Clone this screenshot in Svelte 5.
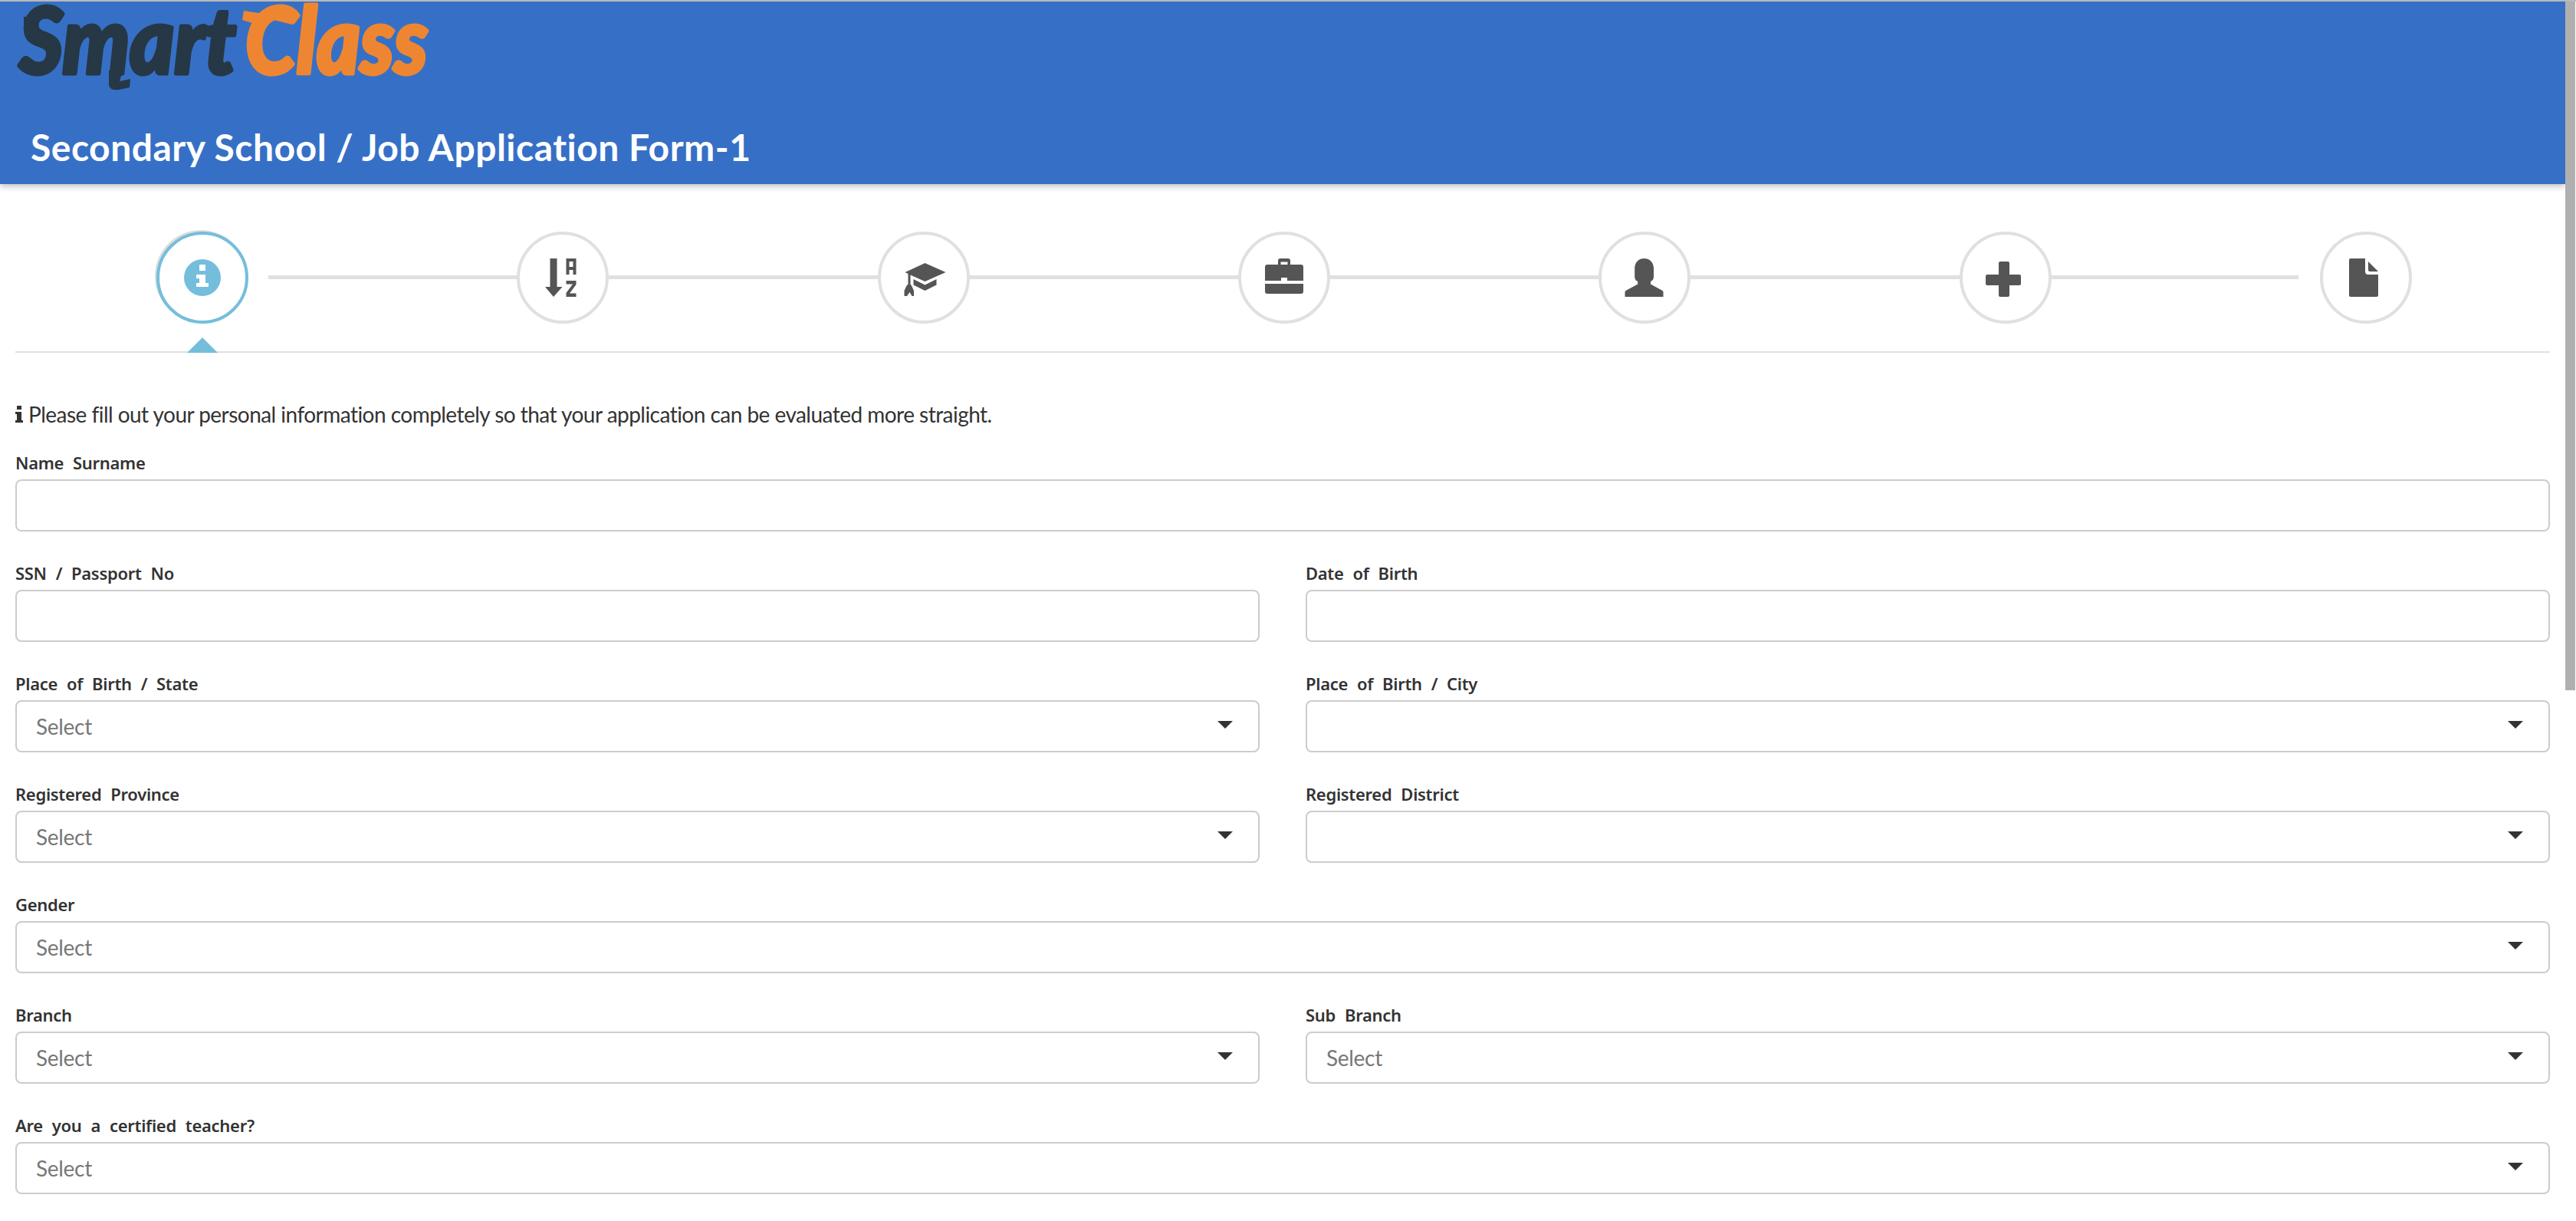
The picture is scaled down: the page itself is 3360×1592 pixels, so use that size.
<script>
  const steps = [
    { vb: '-7 -5 60 60', paths: ['M6.500 0h9v37h7L11 50 0 37h6.500z', 'M27.500 0h13v21h-4v-6h-5v6h-4zM31.500 4v7h5V4z', 'M27.500 29h13v5L32 45.500h8.500V50h-13v-5L36 33.500h-8.500z'] },
    { vb: '-4.500 -11 60 60', paths: ['M27 0L54 12 27 24 8 15.500v12l1.500 2 3 6.500V43H10l-3-5-3.500 5H0v-7l3-6.500 2-2V14L1 12z', 'M12 21l15 7.500L42 21v7.500L27 36l-15-7.500z'] },
    { vb: '-5 -5 60 60', paths: ['M17 8V3q0-3 3-3h10q3 0 3 3v5h-3.500V4.500h-9V8z', 'M3 8h44q3 0 3 3v18H29v-4h-8v4H0V11q0-3 3-3z', 'M0 33h50v10q0 3-3 3H3q-3 0-3-3z'] },
    { vb: '-4.500 -5 60 60', paths: ['M25 0c8 0 12.500 6 12.500 13v11c0 3-1.500 5-4 6v3.500L49 42q1 1 1 2v6H0v-6q0-1 1-2l15.700-8.500V30c-2.500-1-4-3-4-6V13C12.700 6 17 0 25 0z'] },
    { vb: '-4 -9 60 60', paths: ['M19 0h10q2 0 2 2v15h13q2 0 2 2v10q0 2-2 2H31v13q0 2-2 2H19q-2 0-2-2V31H2q-2 0-2-2V19q0-2 2-2h15V2q0-2 2-2z'] },
    { vb: '-8 -5 60 60', paths: ['M2 0h19v17q0 4 4 4h13v27q0 2-2 2H2q-2 0-2-2V2q0-2 2-2z', 'M25 4l13 13H27q-2 0-2-2z'] }
  ];

  const fields = [
    { label: 'Name Surname', wide: true },
    { label: 'SSN / Passport No' },
    { label: 'Date of Birth' },
    { label: 'Place of Birth / State', select: 'Select' },
    { label: 'Place of Birth / City', select: '' },
    { label: 'Registered Province', select: 'Select' },
    { label: 'Registered District', select: '' },
    { label: 'Gender', select: 'Select', wide: true },
    { label: 'Branch', select: 'Select' },
    { label: 'Sub Branch', select: 'Select' },
    { label: 'Are you a certified teacher?', select: 'Select', wide: true }
  ];
</script>

<div class="page">
  <header class="header">
    <svg class="logo" width="600" height="124" viewBox="0 0 600 124" role="img" aria-label="SmartClass">
      <text class="logo-text dark" x="25" y="94" textLength="283" lengthAdjust="spacingAndGlyphs">Smart</text>
      <text class="logo-text orange" x="320" y="94" textLength="238" lengthAdjust="spacingAndGlyphs">Class</text>
      <path class="dark-fill" d="M31 20l14-2 6 8-20 3z" />
      <path class="dark-fill" d="M142 90h18l-4 14 14-3-1 11-14 3c-8 1-14-1-13-10z" />
      <path class="orange-fill" d="M318 12l20 3 12-6 34 3-3 18-24-6-13 7-12-2-16-5z" />
    </svg>
    <h1 class="title">Secondary School / Job Application Form-1</h1>
  </header>

  <main class="content">
    <nav class="wizard">
      <div class="connector"></div>
      <div class="step active">
        <svg width="48" height="48" viewBox="0 0 48 48">
          <path fill-rule="evenodd" d="M24 0a24 24 0 1 1 0 48a24 24 0 1 1 0-48zM20 7v8h8V7zM16 20v5h4v6h-4v5h16v-5h-4V20z" />
        </svg>
      </div>
      {#each steps as s}
        <div class="step">
          <svg width="60" height="60" viewBox={s.vb}>
            {#each s.paths as d}<path fill-rule="evenodd" {d} />{/each}
          </svg>
        </div>
      {/each}
      <div class="pointer"></div>
    </nav>

    <p class="note">
      <svg class="note-icon" width="10" height="22" viewBox="0 0 10 22"><path d="M2 0h6v5H2zM0 8h8v11h2v3H0v-3h2v-8H0z" /></svg>
      Please fill out your personal information completely so that your application can be evaluated more straight.
    </p>

    <form class="form">
      {#each fields as f}
        <div class="field" class:wide={f.wide}>
          <span class="label">{f.label}</span>
          <div class="control">
            {#if f.select !== undefined}
              <span class="placeholder">{f.select}</span>
              <span class="caret"></span>
            {/if}
          </div>
        </div>
      {/each}
    </form>
  </main>

  <div class="scrollbar"></div>
</div>

<style>
  :global(body) {
    margin: 0;
    background: #fff;
    overflow: hidden;
  }
  .page {
    height: 1592px;
    overflow: hidden;
    position: relative;
    font-family: "Lato", "Noto Sans", sans-serif;
    color: #333;
    border-top: 2px solid #b9b9b9;
    box-sizing: border-box;
  }
  .header {
    width: 3346px;
    height: 238px;
    background: #3670c6;
    box-shadow: 0 3px 8px rgba(0, 0, 0, 0.25);
    display: flex;
    flex-direction: column;
  }
  .logo {
    display: block;
    flex: none;
    overflow: visible;
  }
  .logo-text {
    font-family: "Lato", sans-serif;
    font-weight: 900;
    font-style: italic;
    font-size: 120px;
    stroke-width: 5px;
    stroke-linejoin: round;
  }
  .dark { fill: #263746; stroke: #263746; }
  .orange { fill: #ee8631; stroke: #ee8631; }
  .dark-fill { fill: #263746; }
  .orange-fill { fill: #ee8631; }
  .title {
    margin: 38px 0 0 40px;
    color: #fff;
    font-family: "Lato", sans-serif;
    font-weight: 700;
    font-size: 48px;
    letter-spacing: 0.5px;
    line-height: 56px;
  }
  .content {
    width: 3306px;
    margin-left: 20px;
  }
  .wizard {
    position: relative;
    display: flex;
    justify-content: space-between;
    padding: 62px 180px 36px 184px;
    border-bottom: 2px solid #e0e0e0;
  }
  .connector {
    position: absolute;
    left: 330px;
    right: 328px;
    top: 119px;
    height: 5px;
    background: #e0e0e0;
  }
  .step {
    position: relative;
    width: 120px;
    height: 120px;
    box-sizing: border-box;
    border: 4px solid #e0e0e0;
    border-radius: 50%;
    background: #fff;
    display: flex;
    align-items: center;
    justify-content: center;
    fill: #555;
  }
  .step.active {
    border-color: #74bedc;
    fill: #74bedc;
    box-shadow: -2px -2px 0 0 #ddd;
  }
  .pointer {
    position: absolute;
    left: 224px;
    bottom: -2px;
    width: 0;
    height: 0;
    border-left: 20px solid transparent;
    border-right: 20px solid transparent;
    border-bottom: 20px solid #74bedc;
  }
  .note {
    margin: 62px 0 0;
    font-size: 28px;
    letter-spacing: -0.53px;
    line-height: 36px;
    color: #333;
    display: flex;
    align-items: center;
    gap: 7px;
  }
  .note-icon {
    fill: #333;
    flex: none;
  }
  .form {
    display: grid;
    grid-template-columns: 1fr 1fr;
    column-gap: 60px;
    row-gap: 40px;
    margin-top: 31px;
  }
  .field { min-width: 0; }
  .field.wide { grid-column: 1 / -1; }
  .label {
    display: block;
    font-family: "Noto Sans", sans-serif;
    font-weight: 600;
    font-size: 22px;
    letter-spacing: -0.3px;
    word-spacing: 6.5px;
    line-height: 28px;
    margin-bottom: 8px;
    color: #333;
  }
  .control {
    height: 68px;
    box-sizing: border-box;
    border: 2px solid #ccc;
    border-radius: 8px;
    display: flex;
    align-items: center;
    justify-content: space-between;
    padding: 0 33px 0 25px;
  }
  .placeholder {
    font-size: 28px;
    letter-spacing: -0.3px;
    color: #777;
  }
  .caret {
    width: 0;
    height: 0;
    border-left: 10px solid transparent;
    border-right: 10px solid transparent;
    border-top: 10px solid #333;
    margin-bottom: 5px;
  }
  .scrollbar {
    position: absolute;
    top: 0;
    right: 1px;
    width: 13px;
    height: 898px;
    background: #b0b0b0;
  }
</style>
